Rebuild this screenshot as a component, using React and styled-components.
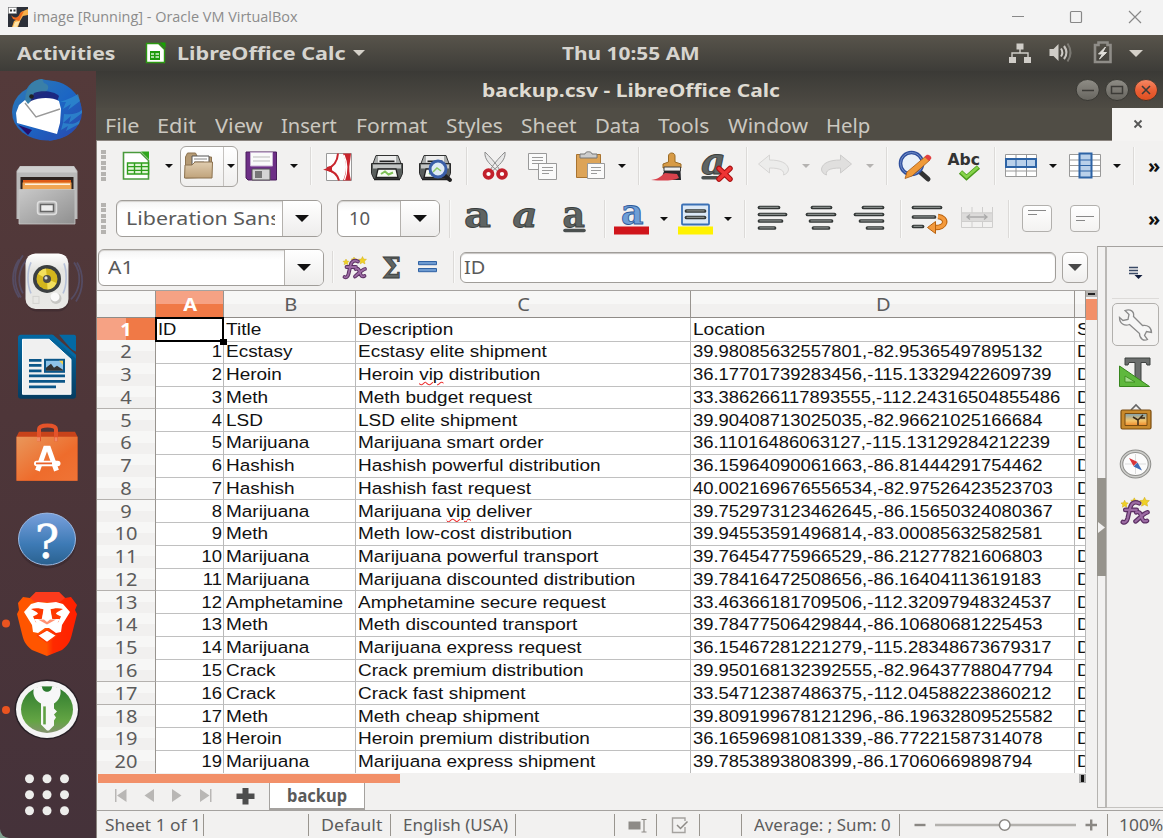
import React, { useLayoutEffect, useRef, useState } from "react";
import styled, { createGlobalStyle, css } from "styled-components";

const UI = `"Noto Sans", "Open Sans", sans-serif`;
const SHEET = `"Liberation Sans", Arial, sans-serif`;

const Global = createGlobalStyle`
  * { box-sizing: border-box; }
  html, body { margin: 0; background: #7fa08f; }
  body { width: 1163px; height: 838px; overflow: hidden; font-family: ${UI}; }
`;

/* ---------- text that is stretched to the width of its slot ---------- */
const FitBox = styled.span`
  display: inline-block;
  flex: none;
  width: ${(p) => p.$w}px;
  white-space: pre;
`;
const FitInner = styled.span`
  display: inline-block;
  transform-origin: 0 50%;
`;
function Fit({ w, children }) {
  const ref = useRef(null);
  const [k, setK] = useState(1);
  useLayoutEffect(() => {
    setK(w / ref.current.offsetWidth);
  }, [w]);
  return (
    <FitBox $w={w}>
      <FitInner ref={ref} style={{ transform: `scaleX(${k})` }}>{children}</FitInner>
    </FitBox>
  );
}

/* column tracks from the left edge of a bar and the starts of its parts */
const tracks = (left, starts) =>
  [left, ...starts].slice(0, -1).map((v, i) => `${starts[i] - v}px`).join(" ") + " auto";

const Svg = styled.svg`
  display: block;
  flex: none;
  overflow: visible;
`;
const Icon = ({ x, y, w, h, children }) => (
  <Svg width={w} height={h} viewBox={`${x} ${y} ${w} ${h}`}>{children}</Svg>
);

/* ---------- frame ---------- */
const Screen = styled.div`
  width: 1163px;
  height: 838px;
  display: flex;
  flex-direction: column;
  overflow: hidden;
`;
const HostBar = styled.header`
  height: 35px;
  flex: none;
  background: #f3f3f3;
  display: flex;
  align-items: center;
  padding: 0 0 2px 8px;
  font: 14.5px/20px "Open Sans", ${UI};
  color: #8c8c8c;
  & > svg:last-child { margin-top: 2px; }
`;
const HostTitle = styled.div`
  margin: 1px auto 0 5px;
`;
const TopBar = styled.div`
  height: 36px;
  flex: none;
  background: linear-gradient(#58544b, #3d3c38);
  display: grid;
  grid-template-columns: ${tracks(0, [17, 146, 177, 353, 562, 1009, 1049, 1094, 1129])};
  align-items: center;
  color: #d6d4cf;
  font-weight: 700;
  font-size: 18px;
  line-height: 34px;
`;
const Body = styled.div`
  flex: 1;
  min-height: 0;
  display: flex;
`;
const Dock = styled.nav`
  width: 96px;
  flex: none;
  background: linear-gradient(#543a3a, #4e3639 45%, #45323a);
  border-bottom-left-radius: 9px;
  overflow: hidden;
  display: grid;
  grid-template-rows: 82px repeat(8, 85.6px);
`;
const Win = styled.main`
  flex: 1;
  min-width: 0;
  background: #f2f1f0;
  border-left: 1px solid #8b8580;
  display: flex;
  flex-direction: column;
`;
const TitleBar = styled.div`
  height: 37px;
  flex: none;
  margin-left: -1px;
  background: linear-gradient(#3b3a36, #4e4b44);
  display: grid;
  grid-template-columns: ${tracks(96, [482, 1074])};
  align-items: center;
  color: #dfdbd2;
  font-weight: 700;
  font-size: 18px;
  line-height: 36px;
`;
const MenuBar = styled.div`
  height: 33px;
  flex: none;
  margin-left: -1px;
  background: #504d45;
  border-bottom: 1px solid #8b8580;
  display: flex;
  align-items: center;
  padding-left: 9px;
  gap: 18.4px;
  color: #cbc8c0;
  font-size: 19px;
  line-height: 32px;
  & > span { position: relative; top: 2px; }
`;
const DocClose = styled.div`
  margin-left: auto;
  width: 51px;
  height: 33px;
  background: #f4f3f2;
  display: grid;
  place-items: center;
`;
const bar = css`
  flex: none;
  display: grid;
  align-items: center;
  color: #5a5a5a;
`;
const Toolbar = styled.div`
  ${bar}
  height: ${(p) => p.$h}px;
  padding-bottom: ${(p) => p.$pb || 0}px;
  grid-template-columns: ${(p) => tracks(97, p.$at)};
`;
const Sep = styled.i`
  width: 2px;
  height: ${(p) => p.$h || 38}px;
  background: linear-gradient(90deg, #dcdad8 50%, #f9f9f8 50%);
`;
const Grip = styled.i`
  width: 5px;
  height: 32px;
  background: repeating-linear-gradient(#b5b3b0 0 4px, #f2f1f0 4px 5.4px);
`;
const box = css`
  border: 1px solid #a7a4a0;
  border-radius: 6px;
  background: linear-gradient(#fff, #f0efee);
`;
const Caret = styled.i`
  width: 0;
  height: 0;
  border: ${(p) => p.$s || 4}px solid transparent;
  border-top-color: ${(p) => p.$c || "#111"};
  border-bottom: 0;
`;
const SplitButton = styled.div`
  ${box}
  width: 58px;
  height: 41px;
  display: grid;
  grid-template-columns: 42px 1fr;
  align-items: center;
  & > svg { margin-left: 3px; }
  & > span { border-left: 1px solid #c5c2bf; height: 100%; display: grid; place-items: center; }
`;
const Combo = styled.div`
  border: 1px solid #a09d99;
  border-radius: 6px;
  background: linear-gradient(#f4f4f4, #fff 30%);
  box-shadow: inset 0 1px 1px #d5d3d0;
  width: ${(p) => p.$w}px;
  height: 37px;
  display: flex;
  overflow: hidden;
  font-size: 18.5px;
  line-height: 34px;
`;
const ComboText = styled.div`
  flex: 1;
  min-width: 0;
  margin-right: 7px;
  padding-left: ${(p) => p.$pad || 9}px;
  overflow: hidden;
`;
const ComboArrow = styled.div`
  width: 39px;
  border-left: 1px solid #b4b1ad;
  background: linear-gradient(#fff, #eeedec);
  display: grid;
  place-items: center;
`;
const More = styled.div`
  color: #111;
  font-weight: 700;
  font-size: 20px;
  line-height: 20px;
`;
const VAlign = styled.div`
  width: 30px;
  height: 27px;
  border: 1px solid #b2b0ad;
  border-radius: 4px;
  background: linear-gradient(#fff, #f3f2f1);
  & > i { display: block; height: 1px; background: #888; margin-left: 5px; }
  & > i:first-child { width: 18px; margin-top: ${(p) => p.$t}px; }
  & > i:last-child { width: 9px; margin-top: 3px; }
`;

/* ---------- lower area ---------- */
const Work = styled.div`
  height: 564px;
  flex: none;
  display: flex;
`;
const Left = styled.div`
  width: 1000px;
  flex: none;
  display: flex;
  flex-direction: column;
`;
const FormulaInput = styled.div`
  width: 596px;
  height: 31px;
  border: 1px solid #a09d99;
  border-radius: 6px;
  background: #fff;
  box-shadow: inset 0 1px 1px #c5c3c0;
  padding-left: 3px;
  font-size: 18px;
  line-height: 29px;
`;
const Expand = styled.div`
  ${box}
  width: 26px;
  height: 31px;
  display: grid;
  place-items: center;
`;
const SheetArea = styled.div`
  height: 483px;
  display: flex;
`;
const Table = styled.div`
  width: 989px;
  flex: none;
  overflow: hidden;
  border-top: 1px solid #a5a29f;
  background: #fff;
`;
const Row = styled.div`
  display: grid;
  grid-template-columns: 59px 68px 132px 335px 384px 11px;
  height: ${(p) => p.$h || 22.77}px;
`;
const Head = styled.div`
  border-right: 1px solid #98948f;
  border-bottom: 1px solid ${(p) => (p.$row ? "#b4b1ae" : "#8f8b87")};
  background: ${(p) => (p.$on ? "linear-gradient(#f6a284 50%, #f07946 50%)" : "linear-gradient(#f7f7f6 50%, #f1f0ef 50%)")};
  ${(p) => p.$on && p.$row && "background: linear-gradient(90deg, #f6a284 50%, #f07946 50%);"}
  color: ${(p) => (p.$on ? "#fff" : "#5c5c5c")};
  font-weight: ${(p) => (p.$on ? 700 : 400)};
  font-size: 17.6px;
  line-height: ${(p) => (p.$row ? 22.5 : 26)}px;
  text-align: center;
  padding-left: ${(p) => (p.$row ? 0 : 2)}px;
  & > span { display: inline-block; transform: scaleX(1.14); }
`;
const Cell = styled.div`
  border-right: 1px solid #b9b9b9;
  border-bottom: 1px solid #c0c0c0;
  overflow: hidden;
  white-space: pre;
  padding: 0 2px;
  font: 16.3px/23px ${SHEET};
  color: #111;
  text-align: ${(p) => (p.$right ? "right" : "left")};
  ${(p) => p.$cursor && "border: 2px solid #000; margin: -1px 0 0 -1px; padding: 0 0 0 1px; line-height: 21px;"}
  ${(p) => p.$right && "padding-right: 1px;"}
  & > span {
    display: inline-block;
    transform: scaleX(${(p) => p.$k || 1.132});
    transform-origin: ${(p) => (p.$right ? "100%" : "0")} 50%;
  }
`;
const CursorWrap = styled.div`
  position: relative;
  display: grid;
  &::after {
    content: "";
    position: absolute;
    right: -3px;
    bottom: -3px;
    width: 7px;
    height: 6px;
    background: #000;
    z-index: 2;
  }
`;
const Typo = styled.u`
  text-decoration: underline wavy #e33 1px;
  text-underline-offset: 1px;
`;
const VScroll = styled.div`
  width: 11px;
  display: flex;
  flex-direction: column;
  gap: 2px;
  & > b { height: 7px; background: #b5b3b0; padding: 3px 2px; }
  & > b::before { content: ""; display: block; height: 2px; background: #222; }
  & > i { height: 21px; background: #f29069; }
`;
const HScroll = styled.div`
  height: 10px;
  display: flex;
  justify-content: space-between;
  padding: 1px 11px 0 1px;
  & > i { width: 302px; height: 9px; background: #f29069; }
  & > b { width: 7px; height: 9px; border: solid #aaa; border-width: 1px 2px; background: #111; }
`;
const Tabs = styled.div`
  height: 27px;
  display: grid;
  grid-template-columns: ${tracks(97, [114, 143, 171, 199, 236, 269])};
  align-items: center;
  & > svg { margin-bottom: 2px; }
`;
const Tab = styled.div`
  width: 96px;
  height: 27px;
  border: 1px solid #a5a29f;
  border-top: 0;
  border-bottom-width: 2px;
  background: #fff;
  padding-left: 17px;
  font-weight: 700;
  font-size: 17px;
  line-height: 25px;
  color: #5a5a5a;
`;
const Splitter = styled.div`
  width: 10px;
  height: 562px;
  border: 1px solid #b5b3b0;
  border-top-color: #a5a29f;
  border-right: 2px solid #bab8b5;
  padding-top: 231px;
`;
const Handle = styled.div`
  width: 9px;
  margin-left: -1px;
  height: 98px;
  background: #96938c;
  display: grid;
  place-items: center;
`;
const Side = styled.aside`
  flex: 1;
  height: 562px;
  border-top: 1px solid #a5a29f;
  border-bottom: 1px solid #c5c3c0;
  display: flex;
  flex-direction: column;
  padding-left: 5px;
`;
const SideItem = styled.div`
  width: 47px;
  height: ${(p) => p.$h}px;
  display: grid;
  place-items: center;
  ${(p) => p.$on && "border: 1px solid #b2b0ad; border-radius: 5px; background: #f4f3f2;"}
  ${(p) => p.$line && "border-bottom: 1px solid #dddbd9; margin-bottom: 4px;"}
`;
const Status = styled.footer`
  flex: 1;
  border-top: 1px solid #a5a29f;
  display: grid;
  grid-template-columns: ${tracks(97, [105, 203, 308, 321, 390, 403, 515, 614, 628, 656, 672, 699, 741, 754, 899, 914, 935, 1085, 1107, 1119])};
  align-items: center;
  padding-top: 1px;
  color: #5c5c5c;
  font-size: 17px;
  line-height: 26px;
`;
const Tick = styled.i`
  width: 1px;
  height: 22px;
  background: #99958f;
`;

/* ---------- drawings ---------- */
const Gradients = () => (
  <Svg width="0" height="0" style={{ position: "absolute" }}>
    <defs>
      <linearGradient id="bird" x1="0" y1="0" x2="1" y2="1"><stop offset="0" stopColor="#2f78b4" /><stop offset=".5" stopColor="#1c66c4" /><stop offset="1" stopColor="#2b45ab" /></linearGradient>
      <linearGradient id="metal" x2="1" y2="1"><stop offset="0" stopColor="#c9c9c9" /><stop offset="1" stopColor="#8f8f8f" /></linearGradient>
      <linearGradient id="speaker" x2="0" y2="1"><stop offset="0" stopColor="#fff" /><stop offset=".3" stopColor="#e4e4e1" /><stop offset="1" stopColor="#e9e9e6" /></linearGradient>
      <linearGradient id="writer" x2="0" y2="1"><stop offset="0" stopColor="#0369a3" /><stop offset="1" stopColor="#063d61" /></linearGradient>
      <linearGradient id="bag" x2="1" y2="1"><stop offset="0" stopColor="#e9975b" /><stop offset=".6" stopColor="#ee6c2c" /><stop offset="1" stopColor="#ef7436" /></linearGradient>
      <linearGradient id="help" x2="0" y2="1"><stop offset="0" stopColor="#79a0dc" /><stop offset=".6" stopColor="#3d7ab5" /><stop offset="1" stopColor="#2a618f" /></linearGradient>
      <linearGradient id="lion" x2="1" y2="0"><stop offset="0" stopColor="#ff5500" /><stop offset=".49" stopColor="#ff5500" /><stop offset=".6" stopColor="#ff2a00" /><stop offset="1" stopColor="#ff2000" /></linearGradient>
      <linearGradient id="green" x2="0" y2="1"><stop offset="0" stopColor="#2c7a2e" /><stop offset=".75" stopColor="#64a544" /><stop offset="1" stopColor="#84926f" /></linearGradient>
      <linearGradient id="tan" x2="0" y2="1"><stop offset="0" stopColor="#e0cdb0" /><stop offset="1" stopColor="#c0a37b" /></linearGradient>
      <linearGradient id="btn" x2="0" y2="1"><stop offset="0" stopColor="#8f8d86" /><stop offset="1" stopColor="#66645e" /></linearGradient>
      <linearGradient id="close" x2="0" y2="1"><stop offset="0" stopColor="#f58a66" /><stop offset=".5" stopColor="#ec6036" /><stop offset="1" stopColor="#de4f20" /></linearGradient>
      <linearGradient id="sunset" x2="0" y2="1"><stop offset="0" stopColor="#7ea0b0" /><stop offset=".6" stopColor="#f3c46a" /><stop offset="1" stopColor="#f08c2c" /></linearGradient>
    </defs>
  </Svg>
);

const DockIcon = ({ n, children }) => (
  <Icon x={0} y={n === 0 ? 71 : 153 + (n - 1) * 85.6} w={96} h={n === 0 ? 82 : 85.6}>{children}</Icon>
);

const Sheet = ({ x, y, w, h }) => (
  <path d={`M${x} ${y}h${w}v${h}h${-w}zM${x} ${y + h / 3}h${w}M${x} ${y + (2 * h) / 3}h${w}M${x + w / 3} ${y}v${h}M${x + (2 * w) / 3} ${y}v${h}`} fill="#e2f5d8" stroke="#2f9e1d" strokeWidth="1.400" />
);

const Printer = ({ x = 371 }) => (
  <g transform={`translate(${x - 371} 0)`}>
    <path d="M376 155.500h22l3 8h-28z" fill="#a9acab" stroke="#333" />
    <path d="M378 156h18v6.500h-18z" fill="#ededed" />
    <path d="M379.500 161.300h15" stroke="#222" strokeWidth="1.600" />
    <path d="M371.500 163.500h31v10l-2.500 5.500h-26l-2.500-5.500z" fill="#595e5c" stroke="#2a2a2a" />
    <path d="M373 164.500h28v4h-28z" fill="#c3c5c4" />
    <path d="M378 169h18l2 8.500h-22z" fill="#f7fbf4" stroke="#222" strokeWidth="1.300" />
    <path d="M381 174l4-2.500 3.500 3 4.500-2" stroke="#7fc257" strokeWidth="2" fill="none" />
    <path d="M374 179.500h26" stroke="#222" strokeWidth="1.500" />
  </g>
);

const Lines = ({ x, rows }) => (
  <g>
    {rows.map(([a, b, y], i) => (
      <g key={i}>
        <path d={`M${x + a + 1.5} ${y}H${x + b - 1.5}`} stroke="#333736" strokeWidth="3.700" strokeLinecap="round" />
        <path d={`M${x + a + 2} ${y - 0.2}H${x + b - 2}`} stroke="#858a88" strokeWidth="1.300" strokeLinecap="round" />
      </g>
    ))}
  </g>
);

const Arrow = ({ flip }) => (
  <g transform={flip ? "translate(1610 0) scale(-1 1)" : undefined}>
    <path d="M758.500 164l11-9v5c11 0 18 3 19 9 0 3-2 5-5 6 1-4-2-7-14-7v5z" fill={flip ? "#e0dfde" : "#ececeb"} stroke={flip ? "#cdcccb" : "#d6d5d4"} />
  </g>
);

const Fx = () => (
  <g>
    <g fill="#f0d026" stroke="#cda90f" strokeWidth=".4">
      <path d="M346 258l1 2 2 .3-1.500 1.500.4 2-1.900-1-1.900 1 .4-2-1.500-1.500 2-.3zM354 256l.9 1.800 2 .3-1.400 1.300.3 1.900-1.800-.9-1.800.9.3-1.900-1.400-1.300 2-.3zM362.500 255.500l1.200 2.500 2.800.3-2 1.900.5 2.700-2.500-1.300-2.500 1.300.5-2.700-2-1.900 2.800-.3z" />
    </g>
    <g fill="none" strokeLinecap="round">
      <path d="M358 260.500c-4-2-6.500 0-7.500 4l-2 8.500c-.8 3-2.500 4-4 3M346.500 266h9.500M355.500 268c3-1 3.500 1 4.500 4s2 4 4.500 3M365 268c-3 .5-8 6-10 7.500" stroke="#5b2f63" strokeWidth="3.800" />
      <path d="M358 260.500c-4-2-6.500 0-7.500 4l-2 8.500c-.8 3-2.500 4-4 3M346.500 266h9.500M355.500 268c3-1 3.500 1 4.500 4s2 4 4.500 3M365 268c-3 .5-8 6-10 7.500" stroke="#9c6ba3" strokeWidth="1.800" />
    </g>
  </g>
);

const Glyph = styled.text`
  font-family: "DejaVu Serif", serif;
  font-weight: 700;
  font-style: ${(p) => (p.$italic ? "italic" : "normal")};
  font-size: ${(p) => p.$size || 36}px;
  fill: ${(p) => p.$fill || "#5f6463"};
  stroke: ${(p) => p.$line || "#3a3e3d"};
  stroke-width: 0.9px;
`;

const A = <Caret $s={4.5} />;
const Grey = <Caret $s={4.5} $c="#b5b3b1" />;

const ROWS = [
  ["1", "Ecstasy", "Ecstasy elite shipment", "39.98085632557801,-82.95365497895132"],
  ["2", "Heroin", "Heroin vip distribution", "36.17701739283456,-115.13329422609739"],
  ["3", "Meth", "Meth budget request", "33.386266117893555,-112.24316504855486"],
  ["4", "LSD", "LSD elite shipment", "39.90408713025035,-82.96621025166684"],
  ["5", "Marijuana", "Marijuana smart order", "36.11016486063127,-115.13129284212239"],
  ["6", "Hashish", "Hashish powerful distribution", "36.15964090061663,-86.81444291754462"],
  ["7", "Hashish", "Hashish fast request", "40.002169676556534,-82.97526423523703"],
  ["8", "Marijuana", "Marijuana vip deliver", "39.752973123462645,-86.15650324080367"],
  ["9", "Meth", "Meth low-cost distribution", "39.94553591496814,-83.00085632582581"],
  ["10", "Marijuana", "Marijuana powerful transport", "39.76454775966529,-86.21277821606803"],
  ["11", "Marijuana", "Marijuana discounted distribution", "39.78416472508656,-86.16404113619183"],
  ["12", "Amphetamine", "Amphetamine secure request", "33.46366181709506,-112.32097948324537"],
  ["13", "Meth", "Meth discounted transport", "39.78477506429844,-86.10680681225453"],
  ["14", "Marijuana", "Marijuana express request", "36.15467281221279,-115.28348673679317"],
  ["15", "Crack", "Crack premium distribution", "39.950168132392555,-82.96437788047794"],
  ["16", "Crack", "Crack fast shipment", "33.54712387486375,-112.04588223860212"],
  ["17", "Meth", "Meth cheap shipment", "39.809199678121296,-86.19632809525582"],
  ["18", "Heroin", "Heroin premium distribution", "36.16596981081339,-86.77221587314078"],
  ["19", "Marijuana", "Marijuana express shipment", "39.7853893808399,-86.17060669898794"],
];

const spell = (t) =>
  t.includes(" vip ") ? <>{t.split("vip")[0]}<Typo>vip</Typo>{t.split("vip")[1]}</> : t;

const MENUS = [["File", 34], ["Edit", 39], ["View", 48], ["Insert", 56], ["Format", 72], ["Styles", 57], ["Sheet", 55], ["Data", 45], ["Tools", 51], ["Window", 80], ["Help", 44]];

function DockBar() {
  return (
    <Dock>
      <DockIcon n={0}>
        <ellipse cx="47" cy="112" rx="35" ry="28.500" fill="url(#bird)" />
        <path d="M25 101c-1-13 6-21 17-22 3 2 15 0 25 7 12 8 16 18 14 30-2 12-12 23-33 25 8-4 14-12 14-22 0-14-10-24-37-18z" fill="url(#bird)" />
        <path d="M80 101l-12 9 3-6-8 5 3-7-6 0c8-3 14-5 18-8zM82 113l-13 10 2-7-8 7 1-9c7 1 13 0 18-4zM79 124l-13 7 2-5-7 4 2-7c6 1 12 2 17-3z" fill="#2f93d2" opacity=".65" />
        <path d="M25 103c0-14 6-23 17-24l2 4c7 2 5 9-3 11-6 2-10 4-11 10l-4 4z" fill="#397fa8" />
        <path d="M34 93c8-3 20-2 25 3l-2 6H30z" fill="#1a1872" opacity=".8" />
        <path d="M31 101c8-4 22-4 28 0l2 8-1 14-3 11-40-11-1-10 3-8 6-5 3 4z" fill="#fff" />
        <path d="M25 103l11 14 24-8" fill="none" stroke="#999" strokeWidth="1.400" />
        <path d="M18 125l14 5-4 5z" fill="#26106a" />
        <circle cx="31.500" cy="96.500" r="2.300" fill="#222" />
      </DockIcon>
      <DockIcon n={1}>
        <path d="M20 166h54l3.500 5v48h-61v-48z" fill="#b9b9b9" />
        <path d="M20 166.500h54l3 6H17z" fill="#cfcfcf" />
        <path d="M20.500 177h53v13h-53z" fill="#2d2320" />
        <path d="M23 180h48v10H23z" fill="#de5b17" />
        <path d="M22.500 182.500h49v8h-49z" fill="#f0a553" />
        <path d="M25 184.200h45" stroke="#fff1df" strokeWidth="1.600" />
        <path d="M19 189.500h56V224H19z" fill="url(#metal)" stroke="#c8c8c8" strokeWidth=".8" />
        <rect x="37.500" y="201.500" width="19" height="13" rx="3" fill="#b9b9b9" stroke="#dedede" strokeWidth="1.500" />
        <rect x="40.500" y="204.500" width="13" height="7" fill="#eee" stroke="#666" strokeWidth="1.500" />
      </DockIcon>
      <DockIcon n={2}>
        <g fill="none" stroke="#59608c" strokeWidth="1.800" opacity=".5"><path d="M19 259c-8 12-8 26 0 38M23 255c-9 12-11 28-2 42M27 259c-9 10-10 24-4 34M71 299c10-10 11-26 3-37M76 301c8-12 8-28 1-39" /></g>
        <rect x="26" y="254" width="43" height="57" rx="11" fill="#35262b" opacity=".5" />
        <rect x="25.500" y="253" width="43" height="55.500" rx="10" fill="url(#speaker)" />
        <path d="M31 262c-4 9-4 22 0 31M63 293c4-8 4-22 1-30" fill="none" stroke="#a9b6d4" strokeWidth="1.600" opacity=".8" />
        <circle cx="47" cy="278.500" r="14" fill="#3b3f40" />
        <circle cx="47" cy="278.500" r="10.500" fill="#d3b61d" />
        <path d="M47 278.500l-9-5a10.500 10.500 0 0 1 8-5.500zM47 278.500l9.500 4a10.500 10.500 0 0 1-9 6.500z" fill="#f3df5c" />
        <circle cx="47" cy="278.500" r="4" fill="#4a4a48" /><circle cx="46" cy="277.500" r="1.600" fill="#ddd" />
        <circle cx="56" cy="298" r="5.500" fill="#c6c6c3" /><circle cx="55" cy="296.500" r="4.500" fill="#fafafa" />
        <rect x="33" y="296" width="6" height="7" fill="none" stroke="#d3d3d0" />
      </DockIcon>
      <DockIcon n={3}>
        <path d="M18 338c0-2 1-3 3-3h31l24 21v40c0 2-1 3-3 3H21c-2 0-3-1-3-3z" fill="url(#writer)" />
        <path d="M59 335h15c1.500 0 2 1 2 2v15c-3-1-4-2-6-4-3-4-7-8-11-13z" fill="#0369a3" />
        <path d="M52 334.500h6.500c5 8 10 14 18 18v4.500z" fill="#4f3639" /><path d="M50 335h3l23 20v4z" fill="#0369a3" />
        <path d="M22.500 339.500H49l22 20v35H22.500z" fill="#f0f0f0" stroke="#fff" />
        <path d="M29 360.500h12.500M29 365.500h12.500M29 371h12.500M29 376h36M29 381.500h36M29 387h27" stroke="#0b5688" strokeWidth="2.800" />
        <path d="M44 359h21v14H44z" fill="#0b5688" /><path d="M46 361h17v10H46z" fill="#8ec3e8" />
        <path d="M46 371v-3l5-4 3 4 3-2 6 4v1z" fill="#333" /><path d="M59 361h4v4z" fill="#f3cf4a" />
      </DockIcon>
      <DockIcon n={4}>
        <path d="M19 431.500h56l2.500 5v44h-61v-44z" fill="#c8431a" />
        <path d="M16.500 436.500h61v44h-61z" fill="url(#bag)" />
        <path d="M39 441v-12c0-5 17-5 17 0v12" fill="none" stroke="#e4532a" strokeWidth="4" />
        <path d="M38.500 441v-4M56 441v-4" stroke="#f08a64" strokeWidth="3" />
        <path d="M37.500 470.500l8-22.500h3l8 22.500" fill="none" stroke="#fff" strokeWidth="5" />
        <rect x="34" y="460.500" width="26.500" height="5.500" rx="2.700" fill="#fff" /><path d="M36 463.200h16" stroke="#e9622a" strokeWidth="1.800" />
      </DockIcon>
      <DockIcon n={5}>
        <ellipse cx="47" cy="542" rx="29.500" ry="27" fill="#33252c" opacity=".5" />
        <ellipse cx="47" cy="539.500" rx="28.500" ry="26" fill="url(#help)" stroke="#9cb9e2" />
        <text x="47" y="558" textAnchor="middle" textLength="24" lengthAdjust="spacingAndGlyphs" fontFamily="DejaVu Serif" fontSize="46" fill="#fff" stroke="#fff" strokeWidth=".6">?</text>
      </DockIcon>
      <DockIcon n={6}>
        <circle cx="6" cy="623.500" r="4" fill="#ea5420" />
        <path d="M36 592h23l6 6 6-1 6 8-2 5 2 4-5 20c-2 9-5 12-10 16l-15 6-15-6c-5-4-8-7-10-16l-5-20 2-4-1-7 5-6 7 1z" fill="url(#lion)" />
        <path d="M36 592h23l6 6-5 4H35l-5-4z" fill="#fb3b1c" />
        <path d="M31 604l7-2 9 1 9-1 7 2 7 8-8 13-1 7-5 1-7-5-2 0-2 0-7 5-5-1-1-7-8-13z" fill="#fff" />
        <path d="M31 609c5-1.500 10-.5 13 .5l-2 9-6 4-3-6 4-2c2-1 1-2-6-5.500zM63 609c-5-1.500-10-.5-13 .5l2 9 6 4 3-6-4-2c-2-1-1-2 6-5.500z" fill="#ff3800" />
        <path d="M43.500 609h7l1.500 10-5 3-5-3z" fill="#fff" />
        <path d="M34 619l8 0 5 3 5-3 8 0-4 6-6 3-3-1-3 1-6-3z" fill="#fff" />
        <path d="M38 619.500l6 0 3 2.500 3-2.500 6 0-9 5z" fill="#ff3800" opacity=".55" />
        <path d="M47 630l9.500 5.500-9.500 7-9.500-7z" fill="#fff" stroke="#ff3800" strokeWidth="1.200" />
      </DockIcon>
      <DockIcon n={7}>
        <circle cx="6" cy="709.500" r="4" fill="#ea5420" />
        <ellipse cx="47" cy="709" rx="32.500" ry="30" fill="#282026" /><ellipse cx="47" cy="709" rx="31" ry="28.500" fill="#f4f4f4" />
        <ellipse cx="47" cy="709" rx="26" ry="23.500" fill="url(#green)" />
        <path d="M34 688c4-3 22-3 26 0 2 6-1 12-6 15v5l3 3-3 3 2 3-2 3v5l-5 5h-2l-6-6v-21c-6-3-9-9-7-15z" fill="#f7f7f7" />
        <path d="M42 686h10c0 7-10 7-10 0z" fill="#2c7a2e" /><path d="M44.500 706v18" stroke="#5fa043" strokeWidth="2.600" />
      </DockIcon>
      <DockIcon n={8}>
        {[779, 795, 811].map((y) => [29.5, 47, 64.5].map((x) => <circle key={x + y} cx={x} cy={y} r="4.500" fill="#ededeb" />))}
      </DockIcon>
    </Dock>
  );
}

function StandardBar() {
  return (
    <Toolbar $h={51} $at={[101, 122, 165, 180, 245, 290, 310, 326, 371, 419, 466, 482, 528, 576, 618, 638, 651, 701, 746, 758, 802, 821, 866, 886, 898, 947, 994, 1005, 1049, 1069, 1113, 1133, 1148]} $pb={1}>
      <i />
      <Grip />
      <Icon x={122} y={151} w={28} h={30}>
        <path d="M123.500 152.500h17l8 8v18.500h-25z" fill="#fff" stroke="#4a9a3c" strokeWidth="1.600" />
        <path d="M141 151.500h8v8z" fill="#2fa51c" /><Sheet x={127.500} y={163} w={21} h={11} />
      </Icon>
      {A}
      <SplitButton>
        <Icon x={184} y={152} w={30} h={28}>
          <path d="M185.500 178v-21l2-4h8l2 4h14v20z" fill="#b59a74" stroke="#8c7350" />
          <path d="M192 156h17v10h-17z" fill="#fff" stroke="#555" /><path d="M194 159h13M194 162h10" stroke="#888" />
          <path d="M184.500 178l.5-13h7l3-3h17.500l-.5 16z" fill="url(#tan)" stroke="#8c7350" />
        </Icon>
        <span>{A}</span>
      </SplitButton>
      <Icon x={245} y={151} w={33} h={30}>
        <path d="M246 152h30.500v28H248l-2-2z" fill="#6d2f86" stroke="#4a1d5c" />
        <path d="M250.500 152.500h22v13.500h-22z" fill="#fafafa" stroke="#c9b3d3" /><path d="M253 157h17M253 161h17" stroke="#bbb" />
        <path d="M252 169h18v11h-18z" fill="#d5d5d5" stroke="#555" /><path d="M255 171h7v7h-7z" fill="#777" />
      </Icon>
      {A}
      <Sep />
      <Icon x={326} y={152} w={28} h={29}>
        <path d="M326.500 153.500h25v27h-25z" fill="#fdfdfd" stroke="#999" />
        <path d="M338 153.500c-.5 8-4 13-11.500 16 7 1.500 11 5 12.500 11" fill="none" stroke="#c9242c" strokeWidth="2" />
        <path d="M327 167l5-1.500v7l-5-2z" fill="#c9242c" />
        <path d="M343 153.500h8l-1 8c-1.500 7-.5 13 1 19h-8c4-9 4-18 0-27z" fill="#c9242c" />
        <path d="M344 155c3.500 8 3.500 17 .5 25" stroke="#fff" strokeWidth="1.300" fill="none" />
      </Icon>
      <Icon x={371} y={152} w={33} h={29}><Printer /></Icon>
      <Icon x={419} y={152} w={33} h={29}>
        <Printer x={419} />
        <path d="M443 174l7 6" stroke="#222" strokeWidth="4" strokeLinecap="round" />
        <circle cx="438" cy="169" r="8" fill="#dfeaf4" stroke="#3a5fa8" strokeWidth="3" /><path d="M433 172l4-4 4 3" stroke="#8cc963" fill="none" strokeWidth="1.500" />
      </Icon>
      <Sep />
      <Icon x={482} y={151} w={27} h={30}>
        <path d="M485 152c-1 8 6 13 12.500 19l2-1.500C496 163 489 156 485 152zM505 152c1 8-6 13-12.500 19l-2-1.500C494 163 501 156 505 152z" fill="#e8e8e8" stroke="#8d8d8d" />
        <ellipse cx="488.500" cy="174" rx="4" ry="3.800" fill="#fff" stroke="#c2202b" strokeWidth="3.700" /><ellipse cx="502" cy="174" rx="4" ry="3.800" fill="#fff" stroke="#c2202b" strokeWidth="3.700" />
      </Icon>
      <Icon x={528} y={152} w={30} h={28}>
        <g fill="#fafafa" stroke="#999"><path d="M528.500 153.500h18v16h-18z" /><path d="M538.500 163.500h18v16h-18z" /></g>
        <path d="M532 157.500h11M532 160.500h11M532 163.500h7M542 167.500h11M542 170.500h11M542 173.500h7" stroke="#999" />
      </Icon>
      <Icon x={576} y={151} w={31} h={30}>
        <path d="M576.500 154.500h24v23h-24z" fill="#dda458" stroke="#a8732f" />
        <path d="M580 158v-4h5c0-3 7-3 7 0h5v4z" fill="#ccc" stroke="#777" />
        <path d="M587.500 163.500h17v15h-17z" fill="#fafafa" stroke="#999" /><path d="M591 167.500h10M591 170.500h10M591 173.500h6" stroke="#999" />
      </Icon>
      {A}
      <Sep />
      <Icon x={651} y={152} w={32} h={29}>
        <path d="M668.500 162v-6c0-4 6.500-4 6.500 0v6l6 2v4h-18v-4z" fill="#d79a45" stroke="#9a6a25" />
        <path d="M664 167h16.500v4H664z" fill="#eee" stroke="#444" /><path d="M664 171h16.500l.5 9h-20z" fill="#26262a" />
        <path d="M651 180c8-1 10-4 14-7l12 1 2 4c-6 3-16 3-28 2z" fill="#d8424c" />
      </Icon>
      <Icon x={701} y={152} w={32} h={30}>
        <Glyph x="701" y="174.500" $size={37} textLength="25" lengthAdjust="spacingAndGlyphs" $italic>a</Glyph>
        <path d="M703 178.800h14" stroke="#4a4f4e" strokeWidth="3.400" strokeLinecap="round" />
        <path d="M719 169.500l11 10.500M730 169.500l-11 10.500" stroke="#a80f10" strokeWidth="5.500" strokeLinecap="round" /><path d="M719 169.500l11 10.500M730 169.500l-11 10.500" stroke="#ee3434" strokeWidth="3.400" strokeLinecap="round" />
      </Icon>
      <Sep />
      <Icon x={758} y={152} w={32} h={29}><Arrow /></Icon>
      {Grey}
      <Icon x={821} y={152} w={32} h={29}><Arrow flip /></Icon>
      {Grey}
      <Sep />
      <Icon x={898} y={150} w={36} h={32}>
        <path d="M919 171l9 8" stroke="#333" strokeWidth="5" strokeLinecap="round" />
        <circle cx="911.500" cy="163.500" r="11" fill="#e9f0f8" stroke="#2f4f9d" strokeWidth="3.600" /><circle cx="911.500" cy="163.500" r="11" fill="none" stroke="#7490cc" strokeWidth="1" />
        <path d="M926 156l4 4-18 16-7 2.500 2-6.500z" fill="#ef9a3a" stroke="#a55b15" strokeWidth=".8" /><path d="M924.500 157l2-2c2-1 6 2 4.500 4l-2 2z" fill="#e14040" />
      </Icon>
      <Icon x={946} y={150} w={35} h={32}>
        <text x="946.500" y="164.500" fontFamily="DejaVu Sans" fontWeight="700" fontSize="15.500" textLength="32.500" lengthAdjust="spacingAndGlyphs" fill="#333">Abc</text>
        <path d="M959.500 172l6 5.500 12-10.500" fill="none" stroke="#4a9a1c" strokeWidth="4.800" /><path d="M960 172l5.500 5 11.500-10" fill="none" stroke="#86d34a" strokeWidth="2.800" />
      </Icon>
      <Sep />
      <Icon x={1005} y={153} w={32} h={26}>
        <path d="M1005.500 154.500h31v22h-31zM1005.500 160h31M1005.500 171h31M1016 154.500v22M1026.500 154.500v22" fill="#fff" stroke="#999" />
        <path d="M1006 159h30v8h-30z" fill="#b9d0ea" stroke="#2d63a5" strokeWidth="2" /><path d="M1016 159v8M1026.500 159v8" stroke="#2d63a5" />
      </Icon>
      {A}
      <Icon x={1069} y={152} w={32} h={28}>
        <path d="M1069.500 154.500h31v22h-31zM1069.500 160h31M1069.500 165.500h31M1069.500 171h31" fill="#fff" stroke="#999" />
        <path d="M1079.500 153.500h12v24h-12z" fill="#b9d0ea" stroke="#2d63a5" strokeWidth="2" /><path d="M1080 160h11M1080 165.500h11M1080 171h11" stroke="#2d63a5" />
      </Icon>
      {A}
      <Sep />
      <More>»</More>
    </Toolbar>
  );
}

function FormatBar() {
  return (
    <Toolbar $h={54} $pb={1} $at={[101, 116, 337, 449, 463, 513, 562, 604, 614, 660, 678, 724, 744, 758, 806, 854, 900, 912, 961, 1008, 1022, 1070, 1148]}>
      <i />
      <Grip />
      <Combo $w={206}><ComboText><Fit w={155}>Liberation Sans</Fit></ComboText><ComboArrow><Caret $s={7} /></ComboArrow></Combo>
      <Combo $w={103}><ComboText $pad={11}><Fit w={21}>10</Fit></ComboText><ComboArrow><Caret $s={7} /></ComboArrow></Combo>
      <Sep />
      <Icon x={463} y={204} w={29} h={32}><Glyph x="464" y="228" textLength="27" lengthAdjust="spacingAndGlyphs">a</Glyph></Icon>
      <Icon x={513} y={204} w={26} h={32}><Glyph x="512.500" y="228" textLength="25" lengthAdjust="spacingAndGlyphs" $italic>a</Glyph></Icon>
      <Icon x={562} y={204} w={24} h={32}><Glyph x="562.500" y="227.500" $size={35} textLength="22.500" lengthAdjust="spacingAndGlyphs">a</Glyph><path d="M565 231.500h19" stroke="#4b504f" strokeWidth="3.600" strokeLinecap="round" /></Icon>
      <Sep />
      <Icon x={614} y={202} w={35} h={34}><Glyph x="621" y="223.500" $size={36} textLength="22.500" lengthAdjust="spacingAndGlyphs" $fill="#6f9ed6" $line="#2d5a9b">a</Glyph><path d="M614 226.500h35v8h-35z" fill="#d0151b" /></Icon>
      {A}
      <Icon x={678} y={202} w={35} h={34}>
        <rect x="682" y="204.500" width="27" height="20" rx="1" fill="#dbe8f6" stroke="#3a70b5" strokeWidth="1.800" />
        <Lines x={685} rows={[[0, 21, 211], [0, 21, 217.500]]} /><path d="M678 226.500h35v8h-35z" fill="#fff200" />
      </Icon>
      {A}
      <Sep />
      <Icon x={758} y={204} w={30} h={32}><Lines x={758} rows={[[0, 22, 208.500], [0, 29, 215.500], [0, 25, 222], [0, 18, 229]]} /></Icon>
      <Icon x={806} y={204} w={30} h={32}><Lines x={806} rows={[[5, 26, 208.500], [0, 30, 215.500], [3, 27, 222], [6, 24, 229]]} /></Icon>
      <Icon x={854} y={204} w={30} h={32}><Lines x={854} rows={[[8, 30, 208.500], [0, 30, 215.500], [5, 30, 222], [12, 30, 229]]} /></Icon>
      <Sep />
      <Icon x={912} y={204} w={35} h={32}>
        <Lines x={912} rows={[[0, 30, 208.500], [0, 24, 218], [0, 12, 227.500]]} />
        <path d="M938 217.500c10 1 9 12-4 11" fill="none" stroke="#b8620f" strokeWidth="5.500" /><path d="M938 217.500c10 1 9 12-4 11" fill="none" stroke="#f49a3c" strokeWidth="3.500" />
        <path d="M927.500 228.500l8-6v12z" fill="#f49a3c" stroke="#b8620f" />
      </Icon>
      <Icon x={961} y={204} w={32} h={32}>
        <path d="M961.500 208v20.500h31V208M961.500 214h31M972 208v6M982.500 208v6M972 222v6M982.500 222v6" fill="none" stroke="#cfcecd" />
        <path d="M961.500 214h31v8.500h-31z" fill="#dcdbda" stroke="#cfcecd" /><path d="M968 218h18M970 215.500l-3 2.500 3 2.500M984 215.500l3 2.500-3 2.500" fill="none" stroke="#aaa" strokeWidth="1.300" />
      </Icon>
      <Sep />
      <VAlign $t={4}><i /><i /></VAlign>
      <VAlign $t={10}><i /><i /></VAlign>
      <More>»</More>
    </Toolbar>
  );
}

function FormulaBar() {
  return (
    <Toolbar $h={44} $pb={2} $at={[98, 332, 343, 382, 418, 453, 460, 1062]}>
      <i />
      <Combo $w={226}><ComboText><Fit w={25}>A1</Fit></ComboText><ComboArrow><Caret $s={7} /></ComboArrow></Combo>
      <Sep $h={32} />
      <Icon x={343} y={255} w={24} h={23}><Fx /></Icon>
      <Icon x={382} y={253} w={20} h={28}><Glyph x="382" y="277.500" $size={28} textLength="19" lengthAdjust="spacingAndGlyphs">Σ</Glyph></Icon>
      <Icon x={418} y={257} w={20} h={20}><path d="M418.500 261.500h18v3.200h-18zM418.500 268.500h18v3.200h-18z" fill="#6d9ad0" stroke="#2f62a4" /></Icon>
      <Sep $h={32} />
      <FormulaInput><Fit w={21}>ID</Fit></FormulaInput>
      <Expand><Caret $s={7} $c="#484848" /></Expand>
    </Toolbar>
  );
}

function Spreadsheet() {
  return (
    <SheetArea>
      <Table>
        <Row $h={26.5}>
          <Head /><Head $on><span>A</span></Head>
          {["B", "C", "D", ""].map((c, i) => <Head key={i}><span>{c}</span></Head>)}
        </Row>
        <Row>
          <Head $row $on><span>1</span></Head>
          <CursorWrap><Cell $cursor><span>ID</span></Cell></CursorWrap>
          {["Title", "Description", "Location", "S"].map((c) => <Cell key={c} $k={1.17}><span>{c}</span></Cell>)}
        </Row>
        {ROWS.map((r, i) => (
          <Row key={i}>
            <Head $row><span>{i + 2}</span></Head>
            <Cell $right><span>{r[0]}</span></Cell>
            <Cell $k={1.165}><span>{r[1]}</span></Cell>
            <Cell $k={1.165}><span>{spell(r[2])}</span></Cell>
            <Cell><span>{r[3]}</span></Cell>
            <Cell><span>D</span></Cell>
          </Row>
        ))}
      </Table>
      <VScroll><b /><i /></VScroll>
    </SheetArea>
  );
}

const Nav = ({ d, x }) => (
  <Icon x={x} y={788} w={16} h={15}><path d={d} fill="#b9b7b5" /></Icon>
);

export default function App() {
  return (
    <Screen>
      <Global />
      <Gradients />
      <HostBar>
        <Icon x={8} y={6} w={20} h={20}>
          <path d="M8 6h20v20H8z" fill="#2c3039" />
          <path d="M28 8v6l-5 1-3 5-2 6h-6l2-6 4-2 3-7z" fill="#f7b04a" /><path d="M11 14c3 4 8 3 9-2l4-2-5 10-6-2z" fill="#ee6a1d" /><path d="M20 20l-3 6h-4l2-5z" fill="#fde3a8" />
          <path d="M8.500 6.500h8v6h-8z" fill="#fff" stroke="#999" strokeWidth=".6" /><path d="M10 9.500h2M13.500 9.500h2" stroke="#333" strokeWidth="2" />
        </Icon>
        <HostTitle><Fit w={265}>image [Running] - Oracle VM VirtualBox</Fit></HostTitle>
        <Icon x={1012} y={8} w={151} h={18}>
          <path d="M1012 15.500h12M1129 10l12 12M1141 10l-12 12" stroke="#888" strokeWidth="1.200" fill="none" />
          <rect x="1070.500" y="10.500" width="11" height="11" rx="1" fill="none" stroke="#888" strokeWidth="1.200" />
        </Icon>
      </HostBar>
      <TopBar>
        <i />
        <Fit w={99}>Activities</Fit>
        <Icon x={147} y={42} w={20} h={21}>
          <path d="M147.500 42.500h12l6 6v13h-18z" fill="#fff" stroke="#2c9a12" strokeWidth="1.400" /><path d="M160.500 41.500h6v6z" fill="#18a303" />
          <path d="M151 50h10v9h-10z" fill="#1d9a0b" /><path d="M152 53h3M156.500 53h3.500M152 56h3M156.500 56h3.500" stroke="#d9f2d2" strokeWidth="1.500" />
        </Icon>
        <Fit w={168}>LibreOffice Calc</Fit>
        <Caret $s={6.5} $c="#d5d1c9" />
        <Fit w={138}>Thu 10:55 AM</Fit>
        <Icon x={1009} y={42} w={22} h={22}><path d="M1016.500 43.500h7v6h-7zM1009 57h7v6h-7zM1024 57h7v6h-7z" fill="#d0cdc8" /><path d="M1020 49v4M1012 57v-4h16v4" stroke="#d0cdc8" fill="none" strokeWidth="1.400" /></Icon>
        <Icon x={1049} y={42} w={24} h={22}>
          <path d="M1049.500 49h4l5-5v17l-5-5h-4z" fill="#d0cdc8" /><path d="M1061 48.500c2 3 2 5 0 8" stroke="#d0cdc8" strokeWidth="2" fill="none" /><path d="M1064 46c3 4 3 9 0 13" stroke="#c6c3be" strokeWidth="2.200" fill="none" /><path d="M1067.500 43.500c4 6 4 12 0 18" stroke="#7b7973" strokeWidth="2" fill="none" />
        </Icon>
        <Icon x={1094} y={41} w={18} h={24}><path d="M1095 45h3.500v-2.500h9V45h3v17h-15.500z" fill="none" stroke="#8f8d88" strokeWidth="2.600" /><path d="M1105.500 47l-7 7h4l-3 5 7-6.500h-4z" fill="#e2e0db" stroke="#e2e0db" /></Icon>
        <Caret $s={7} $c="#d5d1c9" />
      </TopBar>
      <Body>
        <DockBar />
        <Win>
          <TitleBar>
            <i />
            <Fit w={298}>backup.csv - LibreOffice Calc</Fit>
            <Icon x={1074} y={78} w={88} h={24}>
              {[["url(#btn)", 1087.700], ["url(#btn)", 1117], ["url(#close)", 1146]].map(([f, x]) => <ellipse key={x} cx={x} cy="90" rx="11.500" ry="10.500" fill={f} stroke="#2f2e2a" strokeWidth=".8" />)}
              <path d="M1082 90.500h12M1142 86l8 8M1150 86l-8 8" stroke="#3c3b37" strokeWidth="1.600" /><rect x="1111.500" y="86.500" width="11" height="7" fill="none" stroke="#3c3b37" strokeWidth="1.500" />
            </Icon>
          </TitleBar>
          <MenuBar>
            {MENUS.map(([t, w]) => <Fit key={t} w={w}>{t}</Fit>)}
            <DocClose><Icon x={0} y={0} w={8} h={8}><path d="M.5.500l7 7M7.500.500l-7 7" stroke="#555" strokeWidth="1.800" /></Icon></DocClose>
          </MenuBar>
          <StandardBar />
          <FormatBar />
          <Work>
            <Left>
              <FormulaBar />
              <Spreadsheet />
              <HScroll><i /><b /></HScroll>
              <Tabs>
                <i />
                <Nav x={114} d="M115 789h1.500v13H115zM126.500 789v13l-9.500-6.500z" />
                <Nav x={143} d="M154 789v13l-9.500-6.500z" />
                <Nav x={171} d="M172 789v13l9.500-6.500z" />
                <Nav x={199} d="M200 789v13l9.500-6.500zM210 789h1.500v13H210z" />
                <Icon x={236} y={787} w={19} h={18}><path d="M242.500 788h6v5.500h6v5.500h-6v5.500h-6v-5.500h-6v-5.500h6z" fill="#4d4d4d" /></Icon>
                <Tab><Fit w={60}>backup</Fit></Tab>
              </Tabs>
            </Left>
            <Splitter><Handle><Icon x={0} y={0} w={7} h={11}><path d="M0 0l7 5.500L0 11z" fill="#f2f1f0" /></Icon></Handle></Splitter>
            <Side>
              <SideItem $h={52} $line><Icon x={1129} y={265} w={15} h={15}><path d="M1130 267.500h9M1130 270.500h9M1130 273.500h9" stroke="#3a4a66" strokeWidth="1.500" /><path d="M1135.500 275h8l-4 4z" fill="#101c3c" /></Icon></SideItem>
              <SideItem $h={43} $on>
                <Icon x={1119} y={308} w={34} h={31}>
                  <path d="M1125 309.500l4 4-1 5-5 1-3.500-3c0 6 5 9 10 7l10 9c0 5 4 8 8 6l-3-4 2-4 5 1c0-5-4-8-9-7l-9-9c1-5-3-8-8.500-6z" fill="#f6f6f6" stroke="#8a8a8a" strokeWidth="1.300" />
                </Icon>
              </SideItem>
              <SideItem $h={52}>
                <Icon x={1118} y={356} w={33} h={32}><path d="M1124 358h25v7h-3l-1-2.500h-5v20h-6v-20h-6l-1 2.500h-3z" fill="#6b6e6d" stroke="#3f4241" /><path d="M1118.500 366v20.500h30z" fill="#5fb83d" stroke="#37861d" /><path d="M1124 376v6h10z" fill="#a5dc8e" stroke="#37861d" strokeWidth=".8" /></Icon>
              </SideItem>
              <SideItem $h={38}>
                <Icon x={1120} y={403} w={32} h={27}><path d="M1131 409l5-5 5 5" fill="none" stroke="#666" strokeWidth="1.600" /><rect x="1121" y="409" width="30" height="19" rx="1.500" fill="#c98a2c" stroke="#7a4d10" strokeWidth="1.200" /><path d="M1125 412.500h22v12h-22z" fill="url(#sunset)" stroke="#7a4d10" /><path d="M1138 424v-5l-5-3M1138 419l5-5M1140 417l5 0" stroke="#3a2a18" strokeWidth="1.500" fill="none" /></Icon>
              </SideItem>
              <SideItem $h={56}>
                <Icon x={1120} y={450} w={31} h={30}><ellipse cx="1135.500" cy="465" rx="14" ry="12.700" fill="#fcfcfc" stroke="#8f8f8c" strokeWidth="3.600" /><ellipse cx="1135.500" cy="465" rx="14" ry="12.700" fill="none" stroke="#cfcfcc" strokeWidth="1.600" /><path d="M1135.500 455v20M1125 465h21" stroke="#ddd" /><path d="M1129 459l8.500 4-4 4z" fill="#d8343a" /><path d="M1142 471.500l-4.500-8-4 4z" fill="#3f6db5" /></Icon>
              </SideItem>
              <SideItem $h={36}>
                <Svg width="31" height="29" viewBox="343 254.500 24 24"><Fx /></Svg>
              </SideItem>
            </Side>
          </Work>
          <Status>
            <i />
            <Fit w={96}>Sheet 1 of 1</Fit><Tick /><Tick />
            <Fit w={61}>Default</Fit><Tick />
            <Fit w={105}>English (USA)</Fit><Tick /><Tick />
            <Icon x={628} y={818} w={19} h={15}><path d="M628.500 821.500h12v8h-12z" fill="#8d8a86" /><path d="M644 820v12M641.500 819.500h5M641.500 832h5" stroke="#8d8a86" strokeWidth="1.200" /></Icon>
            <Tick />
            <Icon x={672} y={817} w={17} h={16}><path d="M685 827v5.500h-12.500v-14.500h12.500v3" fill="none" stroke="#a5a29f" strokeWidth="1.400" /><path d="M677 825l3.500 3.500 7-7" fill="none" stroke="#8d8a86" strokeWidth="1.500" /></Icon>
            <Tick /><Tick />
            <Fit w={137}>Average: ; Sum: 0</Fit><Tick />
            <Icon x={914} y={818} w={13} h={16}><path d="M914.500 826h11" stroke="#8a8783" strokeWidth="2.400" /></Icon>
            <Icon x={935} y={818} w={141} h={16}><path d="M935 826h141" stroke="#b3b1ad" strokeWidth="2.600" /><circle cx="1004.700" cy="826" r="5.300" fill="#fff" stroke="#8a8783" strokeWidth="1.500" /></Icon>
            <Icon x={1085} y={818} w={13} h={16}><path d="M1085.500 826h11.500M1091.200 820.500v11" stroke="#8a8783" strokeWidth="2.400" /></Icon>
            <Tick />
            <Fit w={44}>100%</Fit>
          </Status>
        </Win>
      </Body>
    </Screen>
  );
}
